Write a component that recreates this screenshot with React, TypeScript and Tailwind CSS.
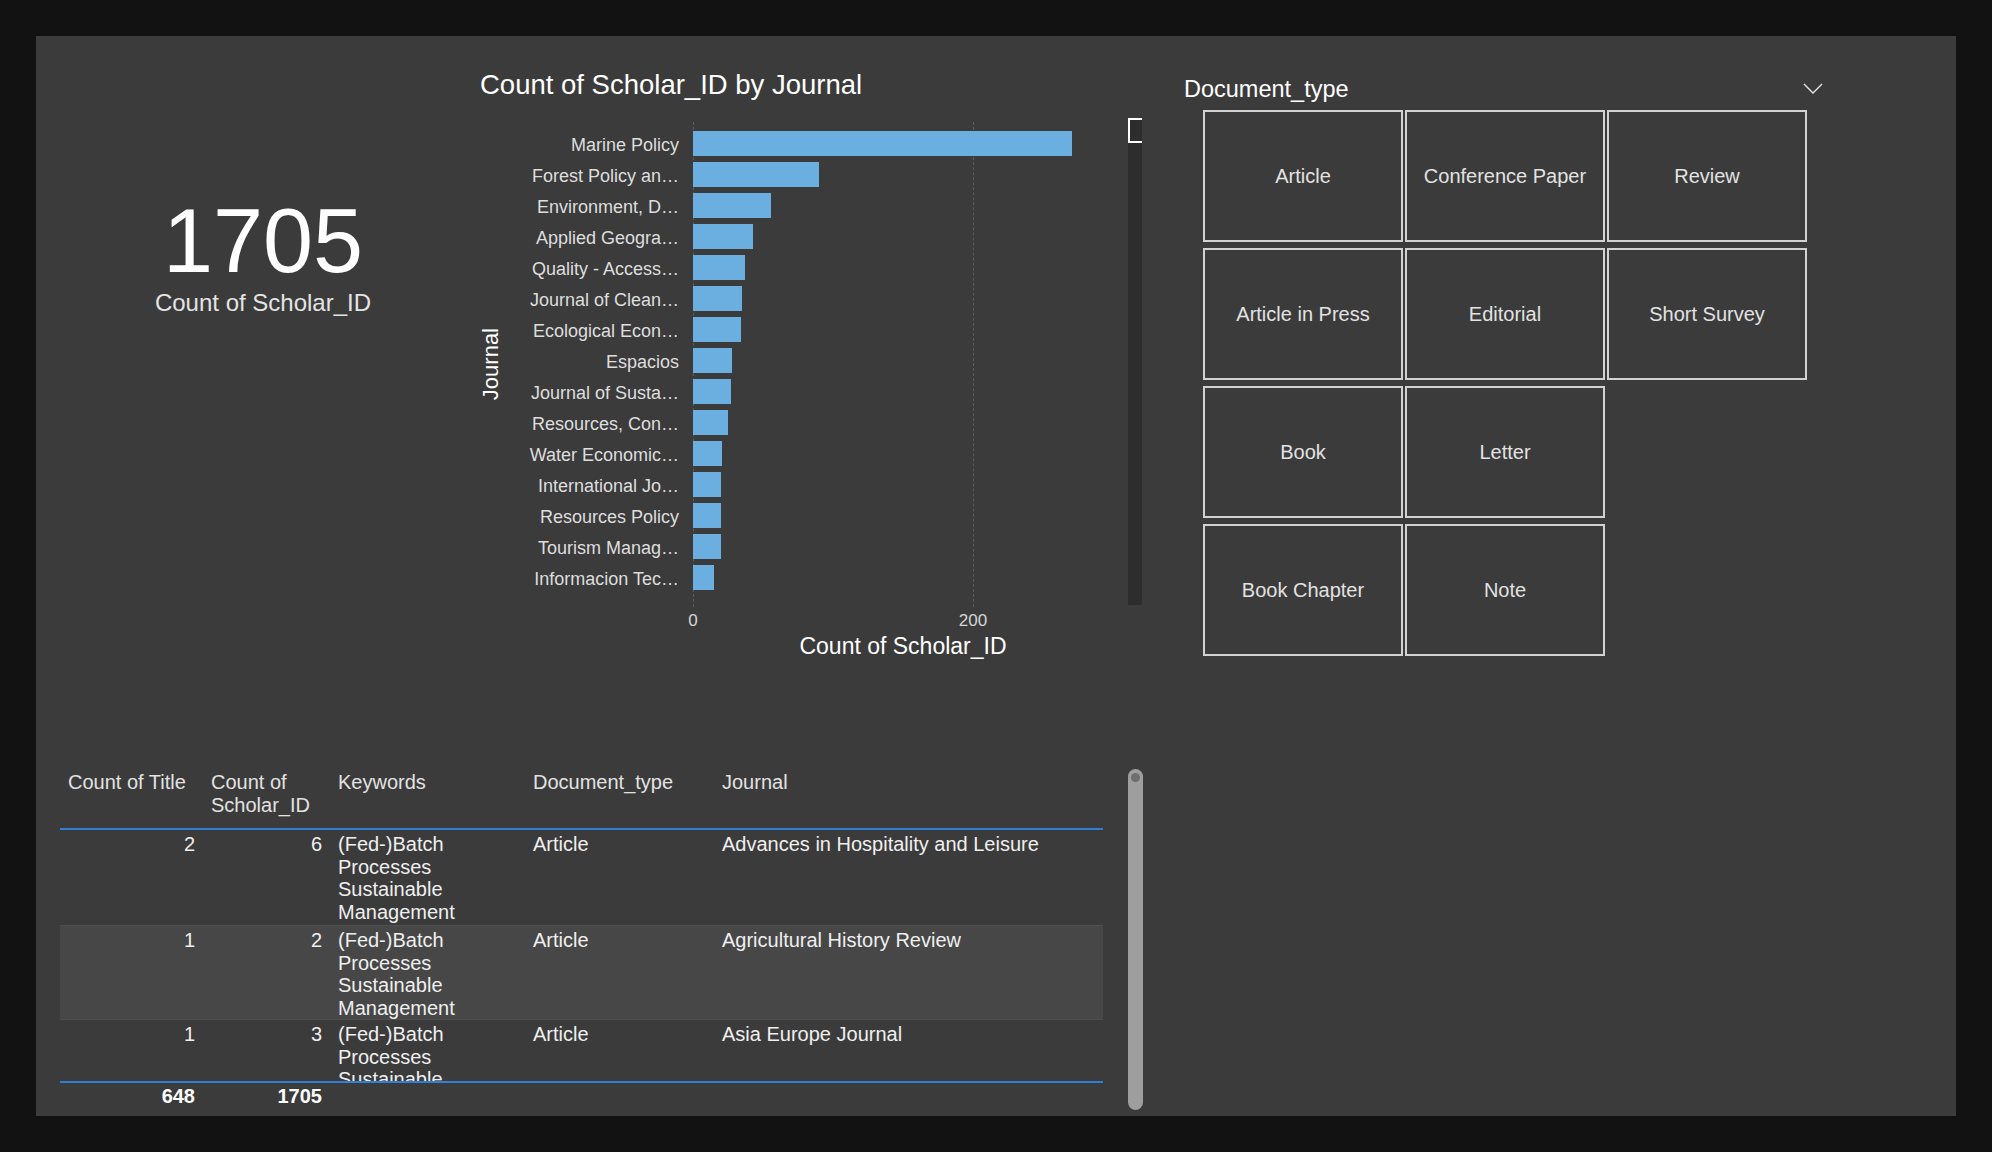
import type { JSX } from 'react'

const SANS = "[font-family:'Liberation_Sans',Arial,sans-serif]"

// 200 on the axis is 280px wide
const PX_PER_UNIT = 280 / 200

type JournalCount = { journal: string; count: number }

const JOURNALS: JournalCount[] = [
    { journal: 'Marine Policy', count: 271 },
    { journal: 'Forest Policy an…', count: 90 },
    { journal: 'Environment, D…', count: 56 },
    { journal: 'Applied Geogra…', count: 43 },
    { journal: 'Quality - Access…', count: 37 },
    { journal: 'Journal of Clean…', count: 35 },
    { journal: 'Ecological Econ…', count: 34 },
    { journal: 'Espacios', count: 28 },
    { journal: 'Journal of Susta…', count: 27 },
    { journal: 'Resources, Con…', count: 25 },
    { journal: 'Water Economic…', count: 21 },
    { journal: 'International Jo…', count: 20 },
    { journal: 'Resources Policy', count: 20 },
    { journal: 'Tourism Manag…', count: 20 },
    { journal: 'Informacion Tec…', count: 15 },
]

// slicer tiles, laid out row by row as Power BI wraps them
const DOC_TYPE_ROWS = [
    ['Article', 'Conference Paper', 'Review'],
    ['Article in Press', 'Editorial', 'Short Survey'],
    ['Book', 'Letter'],
    ['Book Chapter', 'Note'],
]

type Row = { titles: number; scholars: number; keywords: string; docType: string; journal: string }

const ROWS: Row[] = [
    { titles: 2, scholars: 6, keywords: '(Fed-)Batch Processes Sustainable Management', docType: 'Article', journal: 'Advances in Hospitality and Leisure' },
    { titles: 1, scholars: 2, keywords: '(Fed-)Batch Processes Sustainable Management', docType: 'Article', journal: 'Agricultural History Review' },
    { titles: 1, scholars: 3, keywords: '(Fed-)Batch Processes Sustainable Management', docType: 'Article', journal: 'Asia Europe Journal' },
]

const KpiCard = () => (
    <div className="w-[444px] pl-[10px] pt-[160px] text-center">
        <div className="text-[90px] leading-none text-white">1705</div>
        <div className="mt-[5px] text-[24px] leading-none text-[#e4e4e4]">Count of Scholar_ID</div>
    </div>
)

const JournalChart = () => (
    <div className="w-[680px] pt-[35px]">
        <h2 className="text-[27.5px] leading-none text-white">Count of Scholar_ID by Journal</h2>
        <div className="mt-[23px] flex">
            <div className="flex w-[22px] items-center justify-center">
                <span className="rotate-180 text-[22px] leading-none text-white [writing-mode:vertical-rl]">
                    Journal
                </span>
            </div>
            <div className="relative h-[485px] w-[611px] pt-[6px]">
                <div className="absolute top-0 bottom-0 left-[191px] border-l border-dashed border-[#5c5c5c]" />
                <div className="absolute top-0 bottom-0 left-[471px] border-l border-dashed border-[#5c5c5c]" />
                {JOURNALS.map((j) => (
                    <div key={j.journal} className="relative flex h-[31px] items-center">
                        <span className="w-[177px] pt-[4px] text-right text-[18px] leading-none whitespace-nowrap text-[#dedede]">
                            {j.journal}
                        </span>
                        <div
                            className="ml-[14px] h-[25px] bg-[#6aafe0]"
                            style={{ width: `${j.count * PX_PER_UNIT}px` }}
                        />
                    </div>
                ))}
            </div>
            <div className="-mt-[4px] ml-[15px] h-[487px] w-[14px] bg-[#2d2d2d]">
                <div className="h-[25px] border-2 border-r-0 border-white" />
            </div>
        </div>
        <div className="mt-[5px] flex text-[17px] leading-none text-[#d6d6d6]">
            <span className="ml-[193px] w-[40px] text-center">0</span>
            <span className="ml-[240px] w-[40px] text-center">200</span>
        </div>
        <div className="mt-[6px] ml-[213px] w-[420px] text-center text-[23px] leading-none text-white">
            Count of Scholar_ID
        </div>
    </div>
)

const DetailTable = () => (
    <div className="flex pt-[15px] pl-[24px]">
        <div className="w-[1043px] text-[20px]">
            <div className="flex h-[57px] leading-[23px] text-[#e2e2e2]">
                <div className="w-[143px] px-[8px]">Count of Title</div>
                <div className="w-[127px] px-[8px]">Count of Scholar_ID</div>
                <div className="w-[195px] px-[8px]">Keywords</div>
                <div className="w-[189px] px-[8px]">Document_type</div>
                <div className="w-[389px] px-[8px]">Journal</div>
            </div>
            <div className="h-[2px] bg-[#2f7fd6]" />
            <div className="h-[251px] overflow-hidden">
                {ROWS.map((r, index) => (
                    <div
                        key={r.journal}
                        className={`flex h-[95px] pt-[3px] leading-[22.5px] text-[#efefef] ${index === 1 ? 'border-y border-[#4f4f4f] bg-[#474747]' : ''}`}
                    >
                        <div className="w-[143px] px-[8px] text-right">{r.titles}</div>
                        <div className="w-[127px] px-[8px] text-right">{r.scholars}</div>
                        <div className="w-[195px] px-[8px]">{r.keywords}</div>
                        <div className="w-[189px] px-[8px]">{r.docType}</div>
                        <div className="w-[389px] px-[8px]">{r.journal}</div>
                    </div>
                ))}
            </div>
            <div className="h-[2px] bg-[#2f7fd6]" />
            <div className="flex pt-[2px] leading-[22.5px] font-bold text-white">
                <div className="w-[143px] px-[8px] text-right">648</div>
                <div className="w-[127px] px-[8px] text-right">1705</div>
            </div>
        </div>
        <div className="relative -mt-[2px] ml-[25px] h-[341px] w-[15px] rounded-full bg-[#9e9e9e]">
            <div className="absolute top-[4px] left-[3px] h-[9px] w-[9px] rounded-full bg-[#6e6e6e]" />
        </div>
    </div>
)

const DocTypeSlicer = () => (
    <div className="w-[639px] pt-[42px]">
        <div className="flex items-center justify-between">
            <span className="text-[23.5px] leading-none text-white">Document_type</span>
            <svg width="20" height="11" viewBox="0 0 20 11" fill="none" className="-mt-[3px]">
                <polyline points="1,1 10,10 19,1" stroke="#e6e6e6" strokeWidth="1.4" />
            </svg>
        </div>
        <div className="mt-[8px] ml-[19px] flex flex-col gap-[6px]">
            {DOC_TYPE_ROWS.map((row) => (
                <div key={row[0]} className="flex gap-[2px]">
                    {row.map((label) => (
                        <button
                            key={label}
                            type="button"
                            className="flex h-[132px] w-[200px] items-center justify-center border-2 border-[#d2d2d2] text-[20px] text-[#e2e2e2]"
                        >
                            {label}
                        </button>
                    ))}
                </div>
            ))}
        </div>
    </div>
)

export default function App(): JSX.Element {
    return (
        <div className={`${SANS} h-[1152px] w-[1992px] overflow-hidden bg-[#121212] pt-[36px] pl-[36px]`}>
            <div className="flex h-[1080px] w-[1920px] bg-[#3b3b3b]">
                <div className="w-[1148px] shrink-0">
                    <div className="flex h-[720px]">
                        <KpiCard />
                        <JournalChart />
                    </div>
                    <DetailTable />
                </div>
                <DocTypeSlicer />
            </div>
        </div>
    )
}
